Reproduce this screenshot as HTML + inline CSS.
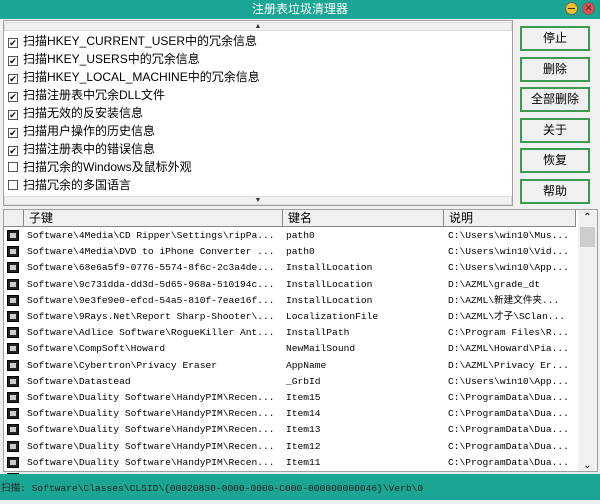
<!DOCTYPE html>
<html><head><meta charset="utf-8"><style>
*{margin:0;padding:0;box-sizing:border-box}
body{width:600px;height:500px;background:#f0f0f0;position:relative;overflow:hidden;font-family:"Liberation Sans","Noto Sans CJK SC",sans-serif;font-size:12px;color:#000}
.abs{position:absolute}
.title{left:0;top:0;width:600px;height:19px;background:#1aa595;color:#fff;text-align:center;line-height:18px;font-size:12px}
.circ{top:2px;width:13px;height:13px;border-radius:50%;border:1px solid #666}
.box{left:3px;top:20px;width:510px;height:186px;background:#fff;border:1px solid #a0a0a0}
.sb{left:0;width:508px;height:9px;background:#f0f0f0;border:1px solid #ddd;font-size:7px;text-align:center;line-height:7px;color:#333}
.item{left:4px;height:18px;line-height:18px;font-size:12px;white-space:nowrap}
.cb{display:inline-block;width:10px;height:10px;border:1px solid #555;vertical-align:-1px;margin-right:5px;font-size:9px;line-height:8px;text-align:center;background:#fff}
.btn{left:520px;width:70px;height:25px;border:2px solid #3d9a4f;background:#f0f0f0;text-align:center;line-height:21px;font-size:12px}
.tbl{left:3px;top:209px;width:595px;height:263px;background:#fff;border:1px solid #a0a0a0}
.hd{top:0;height:17px;background:#f0f0f0;border-right:1px solid #888;border-bottom:1px solid #888;line-height:16px;padding-left:5px}
.row{left:0;height:16px;line-height:16px;font-family:"Liberation Mono",monospace;font-size:9.6px;white-space:nowrap}
.ic{position:absolute;left:3px;top:2px;width:12px;height:11px;background:#222;border:1px solid #000}
.ic:after{content:"";position:absolute;left:2px;top:2px;width:6px;height:5px;background:#ccc}
.status{left:0;top:474px;width:600px;height:26px;background:#1aa595;line-height:30px;font-family:"Liberation Mono","Noto Sans CJK SC",monospace;font-size:9.6px;color:#222;padding-left:1px}
</style></head><body>
<div class="abs title">注册表垃圾清理器</div>
<div class="abs circ" style="left:565px;background:#f0c030"><div style="margin:5px 2px;height:1px;background:#333"></div></div>
<div class="abs circ" style="left:582px;background:#e05050;color:#333;font-size:9px;line-height:11px;text-align:center">✕</div>
<div class="abs box">
<div class="abs sb" style="top:1px">▲</div>
<div class="abs item" style="top:11px"><span class="cb">✔</span>扫描HKEY_CURRENT_USER中的冗余信息</div>
<div class="abs item" style="top:29px"><span class="cb">✔</span>扫描HKEY_USERS中的冗余信息</div>
<div class="abs item" style="top:47px"><span class="cb">✔</span>扫描HKEY_LOCAL_MACHINE中的冗余信息</div>
<div class="abs item" style="top:65px"><span class="cb">✔</span>扫描注册表中冗余DLL文件</div>
<div class="abs item" style="top:83px"><span class="cb">✔</span>扫描无效的反安装信息</div>
<div class="abs item" style="top:101px"><span class="cb">✔</span>扫描用户操作的历史信息</div>
<div class="abs item" style="top:119px"><span class="cb">✔</span>扫描注册表中的错误信息</div>
<div class="abs item" style="top:137px"><span class="cb"></span>扫描冗余的Windows及鼠标外观</div>
<div class="abs item" style="top:155px"><span class="cb"></span>扫描冗余的多国语言</div>
<div class="abs sb" style="top:175px">▼</div>
</div>
<div class="abs btn" style="top:26px">停止</div>
<div class="abs btn" style="top:57px">删除</div>
<div class="abs btn" style="top:87px">全部删除</div>
<div class="abs btn" style="top:118px">关于</div>
<div class="abs btn" style="top:148px">恢复</div>
<div class="abs btn" style="top:179px">帮助</div>
<div class="abs tbl">
<div class="abs hd" style="left:0;width:20px"></div>
<div class="abs hd" style="left:20px;width:259px">子键</div>
<div class="abs hd" style="left:279px;width:161px">键名</div>
<div class="abs hd" style="left:440px;width:132px">说明</div>
<div class="abs" style="left:574px;top:0;width:19px;height:261px;background:#f0f0f0"><div style="text-align:center;font-size:10px;line-height:16px">⌃</div><div style="margin:1px 2px;height:20px;background:#cdcdcd"></div><div style="position:absolute;bottom:0;width:19px;text-align:center;font-size:10px">⌄</div></div>
<div id="rows"></div>
</div>
<div class="abs status">扫描: Software\Classes\CLSID\{00020830-0000-0000-C000-000000000046}\Verb\0</div>
<script>
var d=[["Software\\4Media\\CD Ripper\\Settings\\ripPa...","path0","C:\\Users\\win10\\Mus..."],
["Software\\4Media\\DVD to iPhone Converter ...","path0","C:\\Users\\win10\\Vid..."],
["Software\\68e6a5f9-0776-5574-8f6c-2c3a4de...","InstallLocation","C:\\Users\\win10\\App..."],
["Software\\9c731dda-dd3d-5d65-968a-510194c...","InstallLocation","D:\\AZML\\grade_dt"],
["Software\\9e3fe9e0-efcd-54a5-810f-7eae16f...","InstallLocation","D:\\AZML\\新建文件夹..."],
["Software\\9Rays.Net\\Report Sharp-Shooter\\...","LocalizationFile","D:\\AZML\\才子\\SClan..."],
["Software\\Adlice Software\\RogueKiller Ant...","InstallPath","C:\\Program Files\\R..."],
["Software\\CompSoft\\Howard","NewMailSound","D:\\AZML\\Howard\\Pia..."],
["Software\\Cybertron\\Privacy Eraser","AppName","D:\\AZML\\Privacy Er..."],
["Software\\Datastead","_GrbId","C:\\Users\\win10\\App..."],
["Software\\Duality Software\\HandyPIM\\Recen...","Item15","C:\\ProgramData\\Dua..."],
["Software\\Duality Software\\HandyPIM\\Recen...","Item14","C:\\ProgramData\\Dua..."],
["Software\\Duality Software\\HandyPIM\\Recen...","Item13","C:\\ProgramData\\Dua..."],
["Software\\Duality Software\\HandyPIM\\Recen...","Item12","C:\\ProgramData\\Dua..."],
["Software\\Duality Software\\HandyPIM\\Recen...","Item11","C:\\ProgramData\\Dua..."],["","",""]];
var h="";d.forEach(function(r,i){var t=18+i*16.2;h+='<div class="abs row" style="top:'+t+'px;width:572px"><span class="ic"></span><span class="abs" style="left:23px;font-family:\'Liberation Mono\',\'Noto Sans CJK SC\',monospace">'+r[0]+'</span><span class="abs" style="left:282px">'+r[1]+'</span><span class="abs" style="left:444px;font-family:\'Liberation Mono\',\'Noto Sans CJK SC\',monospace">'+r[2]+'</span></div>';});
document.getElementById("rows").innerHTML=h;
</script>
</body></html>
